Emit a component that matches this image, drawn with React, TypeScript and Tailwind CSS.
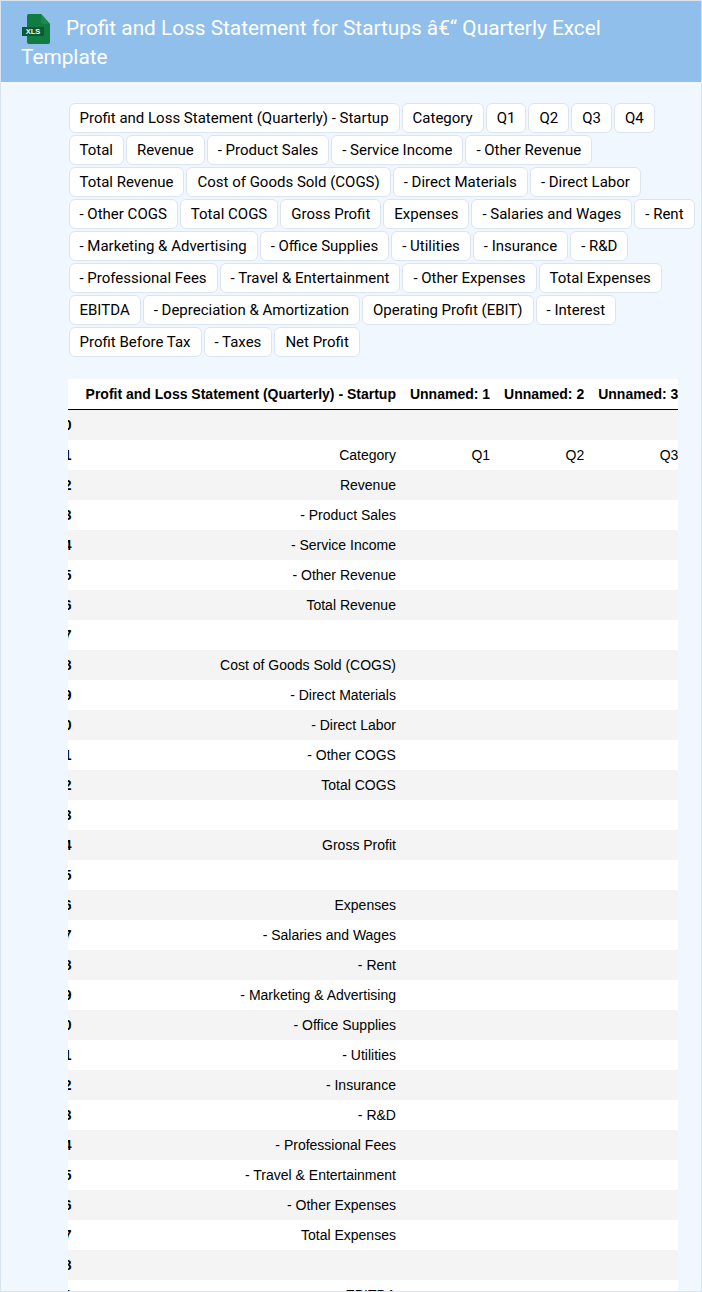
const chips = [
  'Profit and Loss Statement (Quarterly) - Startup', 'Category', 'Q1', 'Q2', 'Q3', 'Q4', 'Total', 'Revenue',
  '- Product Sales', '- Service Income', '- Other Revenue', 'Total Revenue', 'Cost of Goods Sold (COGS)',
  '- Direct Materials', '- Direct Labor', '- Other COGS', 'Total COGS', 'Gross Profit', 'Expenses',
  '- Salaries and Wages', '- Rent', '- Marketing & Advertising', '- Office Supplies', '- Utilities', '- Insurance',
  '- R&D', '- Professional Fees', '- Travel & Entertainment', '- Other Expenses', 'Total Expenses', 'EBITDA',
  '- Depreciation & Amortization', 'Operating Profit (EBIT)', '- Interest', 'Profit Before Tax', '- Taxes', 'Net Profit',
]

const rows = [
  '', 'Category', 'Revenue', '- Product Sales', '- Service Income', '- Other Revenue', 'Total Revenue', '',
  'Cost of Goods Sold (COGS)', '- Direct Materials', '- Direct Labor', '- Other COGS', 'Total COGS', '',
  'Gross Profit', '', 'Expenses', '- Salaries and Wages', '- Rent', '- Marketing & Advertising', '- Office Supplies',
  '- Utilities', '- Insurance', '- R&D', '- Professional Fees', '- Travel & Entertainment', '- Other Expenses',
  'Total Expenses', '', 'EBITDA',
]

function XlsIcon() {
  return (
    <svg viewBox="0 0 30 32" className="inline-block align-top w-[30px] h-[32px] mr-[15px] mt-[-1px] mb-[-4px]">
      <path d="M6 3a2 2 0 0 1 2-2h12l9 10v18a2 2 0 0 1-2 2H8a2 2 0 0 1-2-2z" fill="#107c41" />
      <path d="M20 1l9 10h-7a2 2 0 0 1-2-2z" fill="#1a8a50" />
      <rect x="1" y="14" width="22" height="9" fill="#0b5a30" />
      <text x="12" y="21" textAnchor="middle" fontSize="7.5" fontFamily="Liberation Sans" fontWeight="700" fill="#f0f7f3">XLS</text>
    </svg>
  )
}

export default function App() {
  return (
    <div className="w-[702px] h-[1292px] overflow-hidden bg-[#f0f7ff] border border-[#d8e4f0] font-['Roboto',sans-serif]">
      <header className="bg-[#90bfec] pl-5 pr-4 pt-[13px] pb-[10px] text-[20.8px] leading-[29px] text-white">
        <XlsIcon />
        Profit and Loss Statement for Startups â€“ Quarterly Excel Template
      </header>

      <div className="pl-[67.5px] pt-[21px] flex flex-wrap gap-x-[2px] gap-y-[2px] text-[15px] leading-[20px] text-black">
        {chips.map((chip, index) => (
          <span key={index} className="h-[30px] px-[10px] py-[4px] bg-white border border-[#dbe5f0] rounded-md whitespace-nowrap">
            {chip}
          </span>
        ))}
      </div>

      <div className="ml-[67px] mt-[22px] w-[610px] overflow-hidden bg-white font-['Liberation_Sans',sans-serif] text-[14px] leading-4 text-black">
        <table className="ml-[-19px] border-collapse whitespace-nowrap text-right">
          <thead>
            <tr className="border-b border-black">
              <th className="px-[7px] py-[7px]"><span className="invisible">29</span></th>
              <th className="px-[7px] py-[7px]">Profit and Loss Statement (Quarterly) - Startup</th>
              <th className="px-[7px] py-[7px]">Unnamed: 1</th>
              <th className="px-[7px] py-[7px]">Unnamed: 2</th>
              <th className="px-[7px] py-[7px]">Unnamed: 3</th>
            </tr>
          </thead>
          <tbody>
            {rows.map((label, index) => (
              <tr key={index} className={index % 2 === 0 ? 'bg-[#f4f4f4]' : 'bg-white'}>
                <th className="px-[7px] py-[7px]">{index}</th>
                <td className="px-[7px] py-[7px]">{label}</td>
                <td className="px-[7px] py-[7px]">{index === 1 ? 'Q1' : ''}</td>
                <td className="px-[7px] py-[7px]">{index === 1 ? 'Q2' : ''}</td>
                <td className="px-[7px] py-[7px]">{index === 1 ? 'Q3' : ''}</td>
              </tr>
            ))}
          </tbody>
        </table>
      </div>
    </div>
  )
}
